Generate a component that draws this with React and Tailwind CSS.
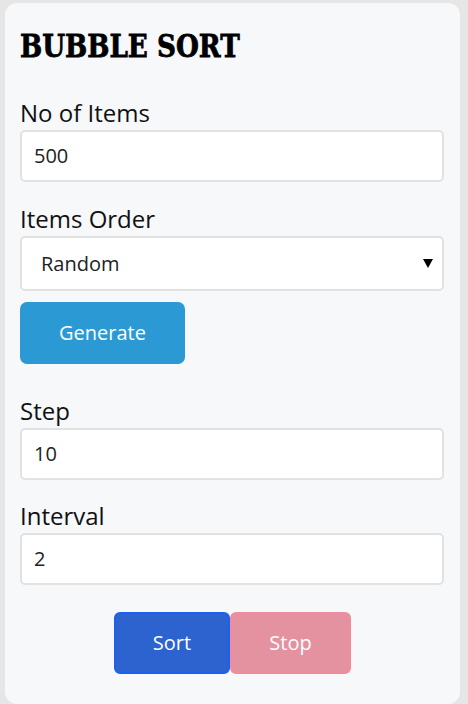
import React from "react";

function Field({ label, value }) {
  return (
    <div>
      <div className="text-[24px] leading-[32px] text-[#111] mb-[1px]">{label}</div>
      <div className="h-[52px] rounded-[5px] border-2 border-[#e2e2e2] bg-white flex items-center pl-[12px] text-[20px] text-[#222]">
        {value}
      </div>
    </div>
  );
}

export default function App() {
  return (
    <div className="min-h-[704px] bg-[#e6e6e6] pt-[3px] pl-[5px] pr-[8px]" style={{ fontFamily: '"Open Sans", "Noto Sans", sans-serif' }}>
      <div className="bg-[#f7f8fa] rounded-[12px] h-[701px] pl-[15px] pr-[16px] pt-[23px]">
        <h1
          className="text-[32px] leading-[40px] font-bold text-black scale-x-[0.82] origin-left whitespace-nowrap [-webkit-text-stroke:0.8px_black]"
          style={{ fontFamily: '"DejaVu Serif", serif' }}
        >
          BUBBLE SORT
        </h1>
        <div className="mt-[31px]">
          <Field label="No of Items" value="500" />
        </div>
        <div className="mt-[21px]">
          <div className="text-[24px] leading-[32px] text-[#111] mb-[1px]">Items Order</div>
          <div className="h-[55px] rounded-[5px] border-2 border-[#e2e2e2] bg-white flex items-center justify-between pl-[19px] pr-[9px] text-[20px] text-[#222]">
            <span>Random</span>
            <svg width="10" height="9" viewBox="0 0 10 9"><path d="M0 0H10L5 9Z" fill="#000" /></svg>
          </div>
        </div>
        <button className="mt-[11px] w-[165px] h-[62px] rounded-[7px] bg-[#2b9ad4] text-white text-[20px]">
          Generate
        </button>
        <div className="mt-[31px]">
          <Field label="Step" value="10" />
        </div>
        <div className="mt-[20px]">
          <Field label="Interval" value="2" />
        </div>
        <div className="mt-[27px] flex justify-center pl-[1px]">
          <button className="w-[116px] h-[62px] rounded-[6px] bg-[#2d63cf] border-2 border-[#1d5ff0] text-white text-[20px]">
            Sort
          </button>
          <button className="w-[121px] h-[62px] rounded-[6px] bg-[#e592a0] border-2 border-[#f08c9c] text-white text-[20px]">
            Stop
          </button>
        </div>
      </div>
    </div>
  );
}
